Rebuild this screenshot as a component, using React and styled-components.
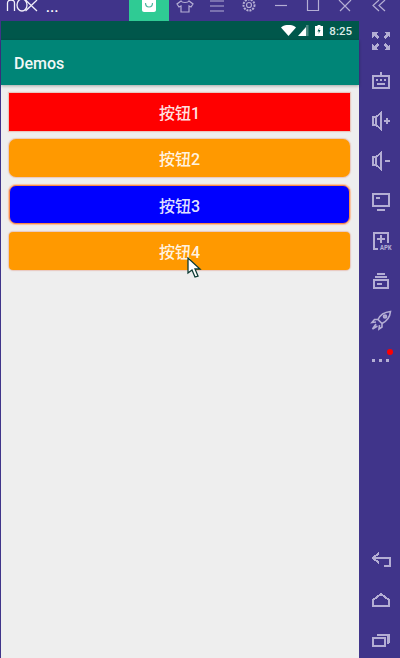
import React from "react";
import styled, { createGlobalStyle } from "styled-components";

const GlobalStyle = createGlobalStyle`
  html, body {
    margin: 0;
    padding: 0;
    background: #40348a;
  }
  body {
    font-family: "Roboto", "Noto Sans CJK SC", sans-serif;
  }
`;

const Frame = styled.div`
  position: relative;
  width: 400px;
  height: 658px;
  background: #40348a;
  overflow: hidden;
  display: flex;
  flex-direction: column;
`;

const TitleBar = styled.div`
  height: 21px;
  flex: none;
  display: flex;
  align-items: flex-start;
`;

const Logo = styled.svg`
  width: 32px;
  height: 13px;
  margin-left: 6px;
  flex: none;
`;

const Dots = styled.span`
  margin-left: 8px;
  width: 83px;
  height: 16px;
  color: #fff;
  font-size: 13px;
  line-height: 16px;
  font-weight: 700;
  letter-spacing: 0.5px;
`;

const ActiveTab = styled.div`
  width: 40px;
  height: 21px;
  background: #2fcb94;
  display: flex;
  justify-content: center;
  flex: none;
`;

const TitleIcon = styled.svg`
  width: 32px;
  height: 13px;
  flex: none;
  fill: none;
  stroke: #b4aed4;
  stroke-width: 1.2;
`;

const Chevrons = styled(TitleIcon)`
  margin-left: 3px;
  width: 30px;
`;

const Body = styled.div`
  flex: 1;
  display: flex;
`;

const Screen = styled.div`
  width: 358px;
  margin-left: 1px;
  background: #eeeeee;
  display: flex;
  flex-direction: column;
`;

const StatusBar = styled.div`
  height: 19px;
  background: #00574b;
  display: flex;
  align-items: center;
  justify-content: flex-end;
  padding-right: 7px;
  color: #dcebe8;
  font-size: 11.5px;
  font-weight: 500;
`;

const StatusIcon = styled.svg`
  fill: #fff;
  flex: none;
  margin-right: ${(p) => p.$gap}px;
`;

const AppBar = styled.div`
  height: 45px;
  box-sizing: border-box;
  padding: 2px 0 0 13px;
  background: #008577;
  display: flex;
  align-items: center;
  color: #f2f8f7;
  font-size: 16px;
  font-weight: 500;
  box-shadow: 0 1px 3px rgba(0, 0, 0, 0.3);
`;

const ButtonList = styled.div`
  display: flex;
  flex-direction: column;
  gap: 8px;
  padding: 8px 9px 0 8px;
`;

const DemoButton = styled.div`
  height: ${(p) => p.$height || 38}px;
  box-sizing: border-box;
  background: ${(p) => p.$bg};
  border-radius: ${(p) => p.$radius}px;
  border: ${(p) => (p.$outlined ? "1.5px solid #f58a4a" : "none")};
  box-shadow: 0 0 1px 1px ${(p) => (p.$outlined ? "rgba(255, 170, 120, 0.7)" : "rgba(225, 150, 130, 0.45)")};
  display: flex;
  align-items: center;
  justify-content: center;
  color: rgba(255, 255, 255, 0.9);
  font-family: "Roboto", "Noto Sans CJK SC", sans-serif;
  font-size: 16px;
  font-weight: 500;
`;

const SideBar = styled.div`
  width: 41px;
  margin-top: -1px;
  display: flex;
  flex-direction: column;
  justify-content: space-between;
`;

const SideGroup = styled.div`
  display: flex;
  flex-direction: column;
`;

const SideSlot = styled.div`
  position: relative;
  height: 40px;
  display: flex;
  align-items: center;
  justify-content: flex-end;
  padding-right: 8px;
`;

const SideIcon = styled.svg`
  width: 22px;
  height: 22px;
  fill: none;
  stroke: #b4aed4;
  stroke-width: 2;
  shape-rendering: ${(p) => (p.$smooth ? "auto" : "crispEdges")};
`;

const ApkLabel = styled.text`
  font-family: "Liberation Mono", monospace;
  font-size: 6.5px;
  font-weight: 700;
  fill: #b4aed4;
  stroke: none;
`;

const Badge = styled.span`
  position: absolute;
  top: 9px;
  right: 7px;
  width: 6px;
  height: 6px;
  border-radius: 50%;
  background: #f00;
`;

const Cursor = styled.svg`
  position: absolute;
  left: 187px;
  top: 257px;
  width: 15px;
  height: 21px;
`;

export default function App() {
  return (
    <Frame>
      <GlobalStyle />
      <TitleBar>
        <Logo viewBox="0 0 32 13" fill="none" stroke="#f2f0fa" strokeWidth="1.3">
          <path d="M1.500 11V3c0-4 7-4 7 0v8" />
          <ellipse cx="16" cy="5" rx="5" ry="6" />
          <path d="M19.500 0l11.500 11M31 0L19.500 11" />
        </Logo>
        <Dots>...</Dots>
        <ActiveTab>
          <svg width="16" height="13" viewBox="0 0 16 13">
            <path d="M1 0h14v10c0 1-1 2-2 2H3c-1 0-2-1-2-2z" fill="#fff" />
            <path d="M4.500 3c0 3 2 4 3.500 4s3.500-1 3.500-4" fill="none" stroke="#4fb7a0" strokeWidth="1.200" />
          </svg>
        </ActiveTab>
        <TitleIcon viewBox="0 0 32 13">
          <path d="M12 1l-4 3 2 3 2-1v6h8V6l2 1 2-3-4-3c-1 2-7 2-8 0z" />
        </TitleIcon>
        <TitleIcon viewBox="0 0 32 13">
          <path d="M9 1h14M9 6h14M9 11h14" />
        </TitleIcon>
        <TitleIcon viewBox="0 0 32 13">
          <circle cx="16" cy="5" r="2.500" />
          <circle cx="16" cy="5" r="5.500" strokeDasharray="2 1" strokeWidth="2" />
        </TitleIcon>
        <TitleIcon viewBox="0 0 32 13">
          <path d="M10 5.500h12" />
        </TitleIcon>
        <TitleIcon viewBox="0 0 32 13">
          <path d="M10.500 -1h11v11.500h-11z" />
        </TitleIcon>
        <TitleIcon viewBox="0 0 32 13">
          <path d="M10 0l11 11M22 0L11 11" />
        </TitleIcon>
        <Chevrons viewBox="0 0 30 13">
          <path d="M15 0l-6 5.500 6 5.500M21 0l-6 5.500 6 5.500" />
        </Chevrons>
      </TitleBar>
      <Body>
        <Screen>
          <StatusBar>
            <StatusIcon $gap={2} width="15" height="11" viewBox="0 0 15 11">
              <path d="M0 2.500C4-1 11-1 15 2.500L7.500 11z" />
            </StatusIcon>
            <StatusIcon $gap={6} width="11" height="11" viewBox="0 0 11 11">
              <path d="M0 11L8 2v9z" />
              <path d="M8 0h2.500v11H8z" opacity="0.3" />
            </StatusIcon>
            <StatusIcon $gap={6} width="8" height="11" viewBox="0 0 8 11">
              <path d="M0 1h2.500V0h3v1H8v10H0z" />
              <path d="M4.500 2.500L2.500 6.500h1.500L3.500 9l2-4H4z" fill="#00574b" />
            </StatusIcon>
            8:25
          </StatusBar>
          <AppBar>Demos</AppBar>
          <ButtonList>
            <DemoButton $bg="#ff0000" $radius={0}>按钮1</DemoButton>
            <DemoButton $bg="#ff9900" $radius={7}>按钮2</DemoButton>
            <DemoButton $bg="#0000ff" $radius={7} $height={39} $outlined>按钮3</DemoButton>
            <DemoButton $bg="#ff9900" $radius={4}>按钮4</DemoButton>
          </ButtonList>
        </Screen>
        <SideBar>
          <SideGroup>
            <SideSlot>
              <SideIcon viewBox="0 0 22 22">
                <path d="M2 3h6l-2 2 3 3-2 2-3-3-2 2zM20 3h-6l2 2-3 3 2 2 3-3 2 2zM2 21h6l-2-2 3-3-2-2-3 3-2-2zM20 21h-6l2-2-3-3 2-2 3 3 2-2z" fill="#b4aed4" stroke="none" />
              </SideIcon>
            </SideSlot>
            <SideSlot>
              <SideIcon viewBox="0 0 22 22">
                <path d="M3 7h16v12H3zM6 11h2M10 11h2M14 11h2M7 15h8M11 3v3" />
              </SideIcon>
            </SideSlot>
            <SideSlot>
              <SideIcon viewBox="0 0 22 22">
                <path d="M3 8h3v8H3zM6 8l5-4v16l-5-4M14 12h6M17 9v6" />
              </SideIcon>
            </SideSlot>
            <SideSlot>
              <SideIcon viewBox="0 0 22 22">
                <path d="M3 8h3v8H3zM6 8l5-4v16l-5-4M15 12h5" />
              </SideIcon>
            </SideSlot>
            <SideSlot>
              <SideIcon viewBox="0 0 22 22">
                <path d="M3 5h16v12H3zM6 9h4M7 20.500h8" />
              </SideIcon>
            </SideSlot>
            <SideSlot>
              <SideIcon viewBox="0 0 22 22">
                <path d="M18 14V4H4v16h4M7 10h8M11 6v8" />
                <ApkLabel x="10" y="21">APK</ApkLabel>
              </SideIcon>
            </SideSlot>
            <SideSlot>
              <SideIcon viewBox="0 0 22 22">
                <path d="M7 5h8M5 8h12M4 11h14v8H4zM7 15h5" />
              </SideIcon>
            </SideSlot>
            <SideSlot>
              <SideIcon viewBox="0 0 22 22" $smooth>
                <path d="M20.500 2.500c-5 .5-10 2.500-12.500 8l4 4c5-2.500 8-7 8.500-12zM8 10.500l-3.500 0-2.500 3 4-.5M12 14.500v3.500l-3 2 .5-4M6 15l-3.500 5 5-3" strokeWidth="1.600" />
                <circle cx="15" cy="7.500" r="1.300" />
              </SideIcon>
            </SideSlot>
            <SideSlot>
              <SideIcon viewBox="0 0 22 22">
                <path d="M2 11h3M9 11h3M16 11h3" strokeWidth="3" />
              </SideIcon>
              <Badge />
            </SideSlot>
          </SideGroup>
          <SideGroup>
            <SideSlot>
              <SideIcon viewBox="0 0 22 22">
                <path d="M9 6l-6 5 6 5M3 11h17v8h-6" />
              </SideIcon>
            </SideSlot>
            <SideSlot>
              <SideIcon viewBox="0 0 22 22">
                <path d="M3 19v-6l8-6 8 6v6z" />
              </SideIcon>
            </SideSlot>
            <SideSlot>
              <SideIcon viewBox="0 0 22 22">
                <path d="M3 11h12v8H3zM7 8h11v9" />
                <path d="M19.500 7v9" strokeWidth="1" />
              </SideIcon>
            </SideSlot>
          </SideGroup>
        </SideBar>
      </Body>
      <Cursor viewBox="0 0 15 21">
        <path d="M1 1v15l4-3 3 7 3-1-3-7h5z" fill="#fff" stroke="#0c3b34" strokeWidth="1.300" />
      </Cursor>
    </Frame>
  );
}
